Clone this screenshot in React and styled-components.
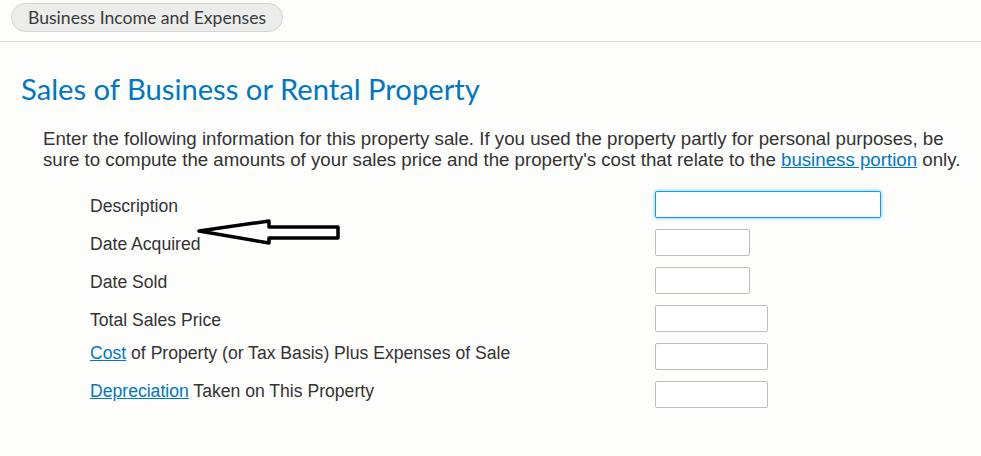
import React from 'react';
import styled, { createGlobalStyle } from 'styled-components';

const rows = [
  { label: 'Description', size: 'wide', focused: true },
  { label: 'Date Acquired', size: 'short' },
  { label: 'Date Sold', size: 'short' },
  { label: 'Total Sales Price', size: 'mid' },
  { link: 'Cost', label: ' of Property (or Tax Basis) Plus Expenses of Sale', size: 'mid', lift: true },
  { link: 'Depreciation', label: ' Taken on This Property', size: 'mid', lift: true },
];

const widths = { wide: 226, short: 95, mid: 113 };

const App = () => {
  return (
    <Page>
      <GlobalStyle />
      <TopBar>
        <Crumb>Business Income and Expenses</Crumb>
      </TopBar>
      <Title>Sales of Business or Rental Property</Title>
      <Intro>
        Enter the following information for this property sale. If you used the property partly for
        personal purposes, be sure to compute the amounts of your sales price and the property's cost
        that relate to the <Link href="#">business portion</Link> only.
      </Intro>
      <Form>
        {rows.map((row) => (
          <React.Fragment key={row.label}>
            <Label $lift={row.lift}>
              {row.link && <Link href="#">{row.link}</Link>}
              {row.label}
            </Label>
            <Field>
              <Input $size={row.size} $focused={row.focused} />
            </Field>
          </React.Fragment>
        ))}
      </Form>
      <Arrow width="150" height="34" viewBox="0 0 150 34">
        <path
          d="M3 12 L73 2 L73 8 L142 8 L142 19 L73 19 L73 24 Z"
          fill="#fff"
          stroke="#000"
          strokeWidth="3.5"
          strokeLinejoin="round"
        />
      </Arrow>
    </Page>
  );
};

export default App;

const GlobalStyle = createGlobalStyle`
  html, body {
    margin: 0;
    background: #fdfdfb;
  }
`;

const Page = styled.div`
  position: relative;
  width: 981px;
  height: 456px;
  overflow: hidden;
  background: #fdfdfb;
  font-family: 'Liberation Sans', Arial, sans-serif;
  color: #333;
`;

const TopBar = styled.div`
  padding: 3px 11px 9px;
  border-bottom: 1px solid #dcdcda;
`;

const Crumb = styled.span`
  display: inline-block;
  height: 29px;
  line-height: 28px;
  box-sizing: border-box;
  padding: 0 16px;
  border: 1px solid #d4d4d2;
  border-radius: 15px;
  background: #ececea;
  font-family: Lato, 'Open Sans', sans-serif;
  font-size: 17.6px;
  color: #393a3d;
`;

const Title = styled.h1`
  margin: 29px 0 0 21px;
  font-family: Lato, 'Open Sans', sans-serif;
  font-weight: 400;
  font-size: 29.2px;
  line-height: 36px;
  color: #0077c5;
`;

const Intro = styled.p`
  margin: 21px 19px 0 43px;
  font-size: 18.7px;
  line-height: 21px;
`;

const Form = styled.div`
  display: grid;
  grid-template-columns: 565px auto;
  row-gap: 11px;
  margin-top: 21px;
  padding-left: 90px;
`;

const Label = styled.div`
  font-size: 17.6px;
  line-height: 20px;
  padding-top: ${(p) => (p.$lift ? '0' : '5px')};
  color: #333;
`;

const Field = styled.div`
  display: flex;
`;

const Input = styled.div`
  width: ${(p) => widths[p.$size]}px;
  height: 27px;
  box-sizing: border-box;
  border: 1px solid ${(p) => (p.$focused ? '#0d9bf5' : '#bdbdbd')};
  border-radius: 2px;
  background: #fff;
  box-shadow: ${(p) => (p.$focused ? '0 0 3px 1px #9fd8ff' : 'none')};
`;

const Link = styled.a`
  color: #0077c5;
  text-decoration: underline;
`;

const Arrow = styled.svg`
  position: absolute;
  left: 196px;
  top: 219px;
`;
